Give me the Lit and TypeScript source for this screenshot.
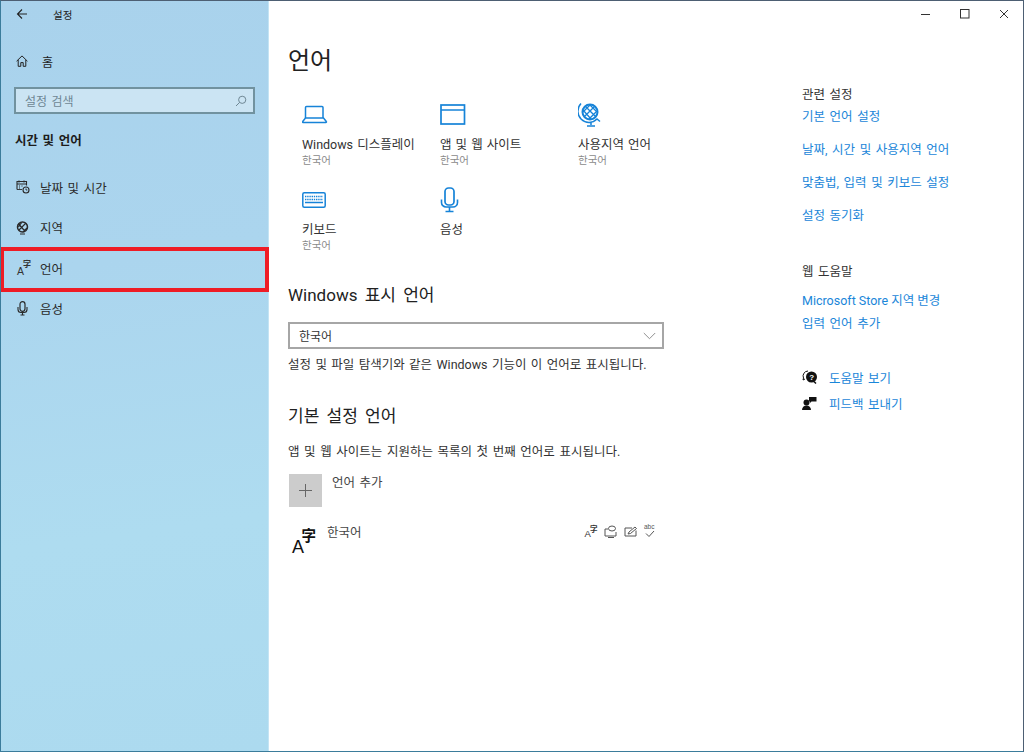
import { LitElement, html, css, svg } from "lit";
import { customElement } from "lit/decorators.js";

const ic = (w: number, h: number, body: unknown, cls = "") =>
  html`<svg class=${cls} width=${w} height=${h} viewBox="0 0 ${w} ${h}" fill="none" stroke="currentColor">${body}</svg>`;

const langGlyph = (big: boolean) =>
  html`<span class=${big ? "az big" : "az"}><span class="a">A</span><span class="z">字</span></span>`;

@customElement("app-root")
export class AppRoot extends LitElement {
  static styles = css`
    :host {
      display: block;
      width: 1024px;
      height: 752px;
      font-family: Roboto, "Noto Sans CJK KR", sans-serif;
      font-size: 12.5px;
      color: #333;
      word-spacing: 1.5px;
    }
    .win {
      box-sizing: border-box;
      width: 1024px;
      height: 752px;
      display: flex;
      background: #fff;
      border-top: 1px solid #4d5f73;
      border-left: 1px solid #3b7c9b;
      border-right: 1px solid #4d5f73;
      border-bottom: 1px solid #3b7c9b;
      overflow: hidden;
    }
    svg { display: block; flex: none; }
    .side {
      width: 268px;
      flex: none;
      background: linear-gradient(172deg, #a9d2ec 0%, #abd5ee 35%, #aedcf0 70%, #acdaef 100%);
      border-right: 1px solid #c4e4f4;
      box-sizing: border-box;
      display: flex;
      flex-direction: column;
    }
    .back { height: 26px; display: flex; align-items: center; padding-left: 15px; color: #222; font-size: 10.5px; }
    .back span { margin-left: 25px; }
    .home { height: 28px; margin-top: 20px; display: flex; align-items: center; padding-left: 15px; color: #222; font-size: 12px; }
    .home span { margin-left: 14px; }
    .search {
      box-sizing: border-box;
      margin: 12px 13px 0 13px;
      height: 27px;
      border: 2px solid #71929f;
      background: #cbe4f3;
      color: #6f8794;
      display: flex;
      align-items: center;
      justify-content: space-between;
      padding: 0 6px 0 9px;
      font-size: 12px;
    }
    .cat { margin: 18px 0 0 14px; line-height: 18px; font-weight: 700; font-size: 12.5px; color: #1c1c1c; }
    .nav { margin-top: 17px; display: flex; flex-direction: column; }
    .item { position: relative; height: 40.5px; display: flex; align-items: center; padding-left: 15px; color: #2a2a2a; }
    .item .lbl { position: absolute; left: 39px; }
    .item.sel::after {
      content: "";
      position: absolute;
      box-sizing: border-box;
      left: -1px;
      right: -1px;
      top: -1px;
      bottom: -3px;
      border: 4px solid #ee1c25;
    }
    .main { flex: 1; display: flex; flex-direction: column; min-width: 0; }
    .ctrl { height: 26px; display: flex; justify-content: flex-end; align-items: center; padding-right: 14px; gap: 29px; color: #333; }
    .cols { display: flex; flex: 1; }
    .col { width: 513px; padding: 18px 0 0 19px; box-sizing: border-box; }
    h1 { margin: 0; font-size: 24px; line-height: 32px; font-weight: 400; color: #222; }
    .tiles { display: grid; grid-template-columns: repeat(3, 138px); row-gap: 19px; margin: 24px 0 0 14px; word-spacing: 1px; }
    .tile { height: 66px; color: #333; }
    .tile .ico { height: 28px; color: #1683d8; display: flex; align-items: center; }
    .tile .t { margin-top: 7px; line-height: 18px; white-space: nowrap; }
    .tile .s { line-height: 14px; font-size: 10.5px; color: #8a8a8a; }
    h2 { margin: 0; font-size: 17px; line-height: 24px; font-weight: 400; color: #222; word-spacing: 3px; }
    h2.a { margin-top: 31px; }
    h2.b { margin-top: 30px; }
    .select {
      box-sizing: border-box;
      width: 376px;
      height: 27px;
      margin-top: 15px;
      border: 2px solid #a6a6a6;
      display: flex;
      align-items: center;
      justify-content: space-between;
      padding: 0 6px 0 9px;
      color: #333;
      font-size: 12px;
    }
    .select svg { color: #8f8f8f; }
    .p { line-height: 18px; white-space: nowrap; color: #333; }
    .p.a { margin-top: 7px; word-spacing: 1.3px; }
    .p.b { margin-top: 15px; }
    .add { display: flex; margin: 13px 0 0 1px; }
    .plus { width: 33px; height: 33px; background: #cccccc; color: #666; display: flex; align-items: center; justify-content: center; }
    .add span { margin: 0 0 0 10px; line-height: 18px; color: #444; }
    .lang { display: flex; margin-top: 17px; width: 368px; height: 34px; }
    .lang .n { margin: 0 0 0 10px; line-height: 18px; color: #444; }
    .feat { margin-left: auto; display: flex; gap: 5.5px; color: #555; align-items: flex-start; padding-top: 1px; }
    .az { display: inline-block; position: relative; width: 14px; height: 14px; font-family: "Liberation Sans", "Noto Sans CJK KR", sans-serif; color: #333; flex: none; }
    .az .a { position: absolute; left: 1px; bottom: -1px; font-size: 10.5px; line-height: 10px; }
    .az .z { position: absolute; right: -1px; top: -1px; font-size: 8px; line-height: 9px; font-weight: 700; }
    .feat .az .a { left: 0; bottom: 0; font-size: 9.5px; }
    .feat .az .z { right: 1px; top: 0; font-size: 7.5px; }
    .az.big { width: 26px; height: 29px; color: #111; margin-left: 3px; margin-top: 4px; }
    .az.big .a { left: 1px; font-size: 18px; line-height: 18px; bottom: 1px; }
    .az.big .z { font-size: 14.5px; line-height: 16px; top: 0; right: 1px; font-weight: 700; }
    .abc { position: relative; width: 13px; height: 14px; flex: none; }
    .abc span { position: absolute; left: 1px; top: -2px; font: 6.5px/8px "Liberation Sans", sans-serif; word-spacing: 0; color: #555; }
    .abc svg { position: absolute; left: 0; top: 0; }
    .right { padding: 59px 0 0 20px; flex: 1; }
    .hd { line-height: 18px; color: #333; }
    .lk { display: block; line-height: 18px; color: #1a86d9; white-space: nowrap; }
    .r1 { margin-top: 4px; }
    .r2 { margin-top: 15px; }
    .hd.h2 { margin-top: 38px; }
    .r3 { margin-top: 11px; word-spacing: 0; }
    .r4 { margin-top: 5px; }
    .help { display: flex; align-items: center; height: 18px; color: #1a86d9; }
    .help svg { color: #111; margin-right: 11px; }
    .help.x { margin-top: 35px; }
    .help.y { margin-top: 8px; }
    .q { font: 700 8px "Liberation Sans", sans-serif; fill: #fff; stroke: none; }
  `;

  render() {
    return html`<div class="win">
      <aside class="side">
        <div class="back">
          ${ic(12, 12, svg`<path d="M11 6H1.500M6 1.500L1.500 6 6 10.500" stroke-width="1.100"/>`)}
          <span>설정</span>
        </div>
        <div class="home">
          ${ic(12, 12, svg`<path d="M.6 6.200L6 .9l5.400 5.300M2.200 5v6.300h2.600V7.600h2.400v3.700h2.600V5" stroke-width="1"/>`)}
          <span>홈</span>
        </div>
        <div class="search">
          <span>설정 검색</span>
          ${ic(12, 12, svg`<circle cx="7.200" cy="4.800" r="3.600" stroke-width="1"/><path d="M4.600 7.400L1 11" stroke-width="1"/>`)}
        </div>
        <div class="cat">시간 및 언어</div>
        <nav class="nav">
          <div class="item">
            ${ic(14, 14, svg`<path d="M1 9.500V1.500h9.500v4M1 4h9.500M3 .5v2M8 .5v2M3 6h1M5.500 6h1M3 8h1" stroke-width="1.100"/><circle cx="10" cy="10" r="3" stroke-width="1.100"/><path d="M10 8.500V10h1.300M1 9.500h5" stroke-width=".9"/>`)}
            <span class="lbl">날짜 및 시간</span>
          </div>
          <div class="item">
            ${ic(13, 14, svg`<circle cx="6.500" cy="6" r="5" stroke-width="1.500"/><path d="M3 3l6 7M10 2L3 9M1.500 6l4-4M7 11l4-4M2 3l7 7" stroke-width="1.100"/><path d="M4 13h5" stroke-width="1"/>`)}
            <span class="lbl">지역</span>
          </div>
          <div class="item sel">
            ${langGlyph(false)}
            <span class="lbl">언어</span>
          </div>
          <div class="item">
            ${ic(13, 15, svg`<rect x="4" y=".7" width="5" height="9.600" rx="2.500" stroke-width="1.200"/><path d="M2 6v2.500a3 3 0 0 0 3 3h3a3 3 0 0 0 3-3V6M6.500 11.500V14M4.500 14h4" stroke-width="1.100"/>`)}
            <span class="lbl">음성</span>
          </div>
        </nav>
      </aside>
      <main class="main">
        <div class="ctrl">
          ${ic(10, 10, svg`<path d="M0 5.500h9" stroke-width="1"/>`)}
          ${ic(10, 10, svg`<rect x=".5" y=".5" width="8.500" height="8.500" stroke-width="1"/>`)}
          ${ic(10, 10, svg`<path d="M1 1l8 8M9 1L1 9" stroke-width="1"/>`)}
        </div>
        <div class="cols">
          <section class="col">
            <h1>언어</h1>
            <div class="tiles">
              <div class="tile">
                <div class="ico">${ic(26, 20, svg`<path d="M3.500 13V2.500a1 1 0 0 1 1-1h15.500a1 1 0 0 1 1 1V13" stroke-width="1.500"/><path d="M3.500 13h18l2.800 3.500a.6.6 0 0 1-.5 1H1a.6.6 0 0 1-.3-1z" stroke-width="1.500"/>`)}</div>
                <div class="t">Windows 디스플레이</div><div class="s">한국어</div>
              </div>
              <div class="tile">
                <div class="ico">${ic(26, 22, svg`<rect x="1" y="1" width="23.500" height="19" stroke-width="1.700"/><path d="M1 6h23.500" stroke-width="1.500"/>`)}</div>
                <div class="t">앱 및 웹 사이트</div><div class="s">한국어</div>
              </div>
              <div class="tile">
                <div class="ico">${ic(24, 26, svg`<circle cx="12" cy="10" r="7.500" stroke-width="2"/><path d="M7 4l11 11M12 3l7 7M5 8l8 9M17 4L6 15M12 3L5 10M19 9l-8 8" stroke-width="1.300"/><path d="M3 1.500a11 11 0 0 0 16 15.500l3 2.500M13 20v3M9 24h8" stroke-width="1.500"/>`)}</div>
                <div class="t">사용지역 언어</div><div class="s">한국어</div>
              </div>
              <div class="tile">
                <div class="ico">${ic(24, 16, svg`<rect x=".8" y=".8" width="22.400" height="14.400" rx="1.500" stroke-width="1.500"/><path d="M3 4.500h18M3 7.500h18" stroke-width="1.500" stroke-dasharray="1.400 .8"/><path d="M3 10.500h18" stroke-width="1.500"/>`)}</div>
                <div class="t">키보드</div><div class="s">한국어</div>
              </div>
              <div class="tile">
                <div class="ico">${ic(19, 26, svg`<rect x="5" y="1" width="9" height="17" rx="3.500" stroke-width="1.700"/><path d="M1.500 12.500v3a4.500 4.500 0 0 0 4.500 4.500h7a4.500 4.500 0 0 0 4.500-4.500v-3M9.500 20v4.500M5.500 24.500h8" stroke-width="1.600"/>`)}</div>
                <div class="t">음성</div>
              </div>
            </div>
            <h2 class="a">Windows 표시 언어</h2>
            <div class="select">
              <span>한국어</span>
              ${ic(13, 8, svg`<path d="M.8 1l5.700 5.700L12.200 1" stroke-width="1"/>`)}
            </div>
            <div class="p a">설정 및 파일 탐색기와 같은 Windows 기능이 이 언어로 표시됩니다.</div>
            <h2 class="b">기본 설정 언어</h2>
            <div class="p b">앱 및 웹 사이트는 지원하는 목록의 첫 번째 언어로 표시됩니다.</div>
            <div class="add">
              <div class="plus">${ic(13, 13, svg`<path d="M6.500 0v13M0 6.500h13" stroke-width="1"/>`)}</div>
              <span>언어 추가</span>
            </div>
            <div class="lang">
              ${langGlyph(true)}
              <div class="n">한국어</div>
              <div class="feat">
                ${langGlyph(false)}
                ${ic(14, 14, svg`<path d="M4 4H1v7h11V7M4 12.500h6" stroke-width="1"/><ellipse cx="8" cy="3.500" rx="3.500" ry="2.500" stroke-width="1"/>`)}
                ${ic(14, 14, svg`<path d="M12 5.500V11H1V3h7" stroke-width="1"/><path d="M4 9l1-2 6-5 1.500 1.500-6 5z" stroke-width="1"/>`)}
                <div class="abc">
                  <span>abc</span>
                  ${ic(13, 14, svg`<path d="M3 8.500l3 3 5-5.500" stroke-width="1"/>`)}
                </div>
              </div>
            </div>
          </section>
          <aside class="right">
            <div class="hd">관련 설정</div>
            <a class="lk r1">기본 언어 설정</a>
            <a class="lk r2">날짜, 시간 및 사용지역 언어</a>
            <a class="lk r2">맞춤법, 입력 및 키보드 설정</a>
            <a class="lk r2">설정 동기화</a>
            <div class="hd h2">웹 도움말</div>
            <a class="lk r3">Microsoft Store 지역 변경</a>
            <a class="lk r4">입력 언어 추가</a>
            <div class="help x">
              ${ic(16, 14, svg`<path d="M6 1a5 5 0 0 0-4.500 7L1 10l2-1" stroke-width="1"/><circle cx="9.500" cy="7" r="5.500" fill="#111" stroke="none"/><path d="M12 11.500l2 2" stroke-width="1.500"/><text class="q" x="7.300" y="10">?</text>`)}
              <span>도움말 보기</span>
            </div>
            <div class="help y">
              ${ic(16, 14, svg`<circle cx="4.500" cy="6.500" r="3" fill="#111" stroke="none"/><path d="M0 14a4.500 4.500 0 0 1 9 0z" fill="#111" stroke="none"/><path d="M7 1h7.500v4.500H9.500L8 7V5.500H7z" fill="#111" stroke="none"/>`)}
              <span>피드백 보내기</span>
            </div>
          </aside>
        </div>
      </main>
    </div>`;
  }
}
